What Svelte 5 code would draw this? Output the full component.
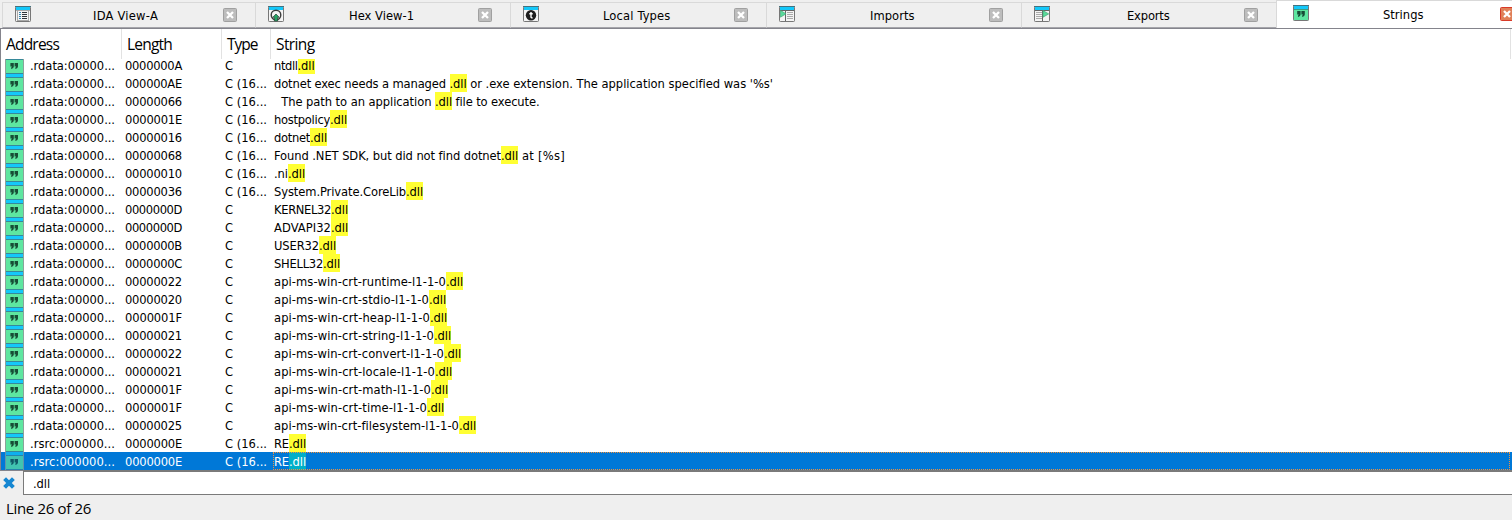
<script>
  const tabs = [
    { name: 'IDA View-A', w: 253, tx: 91, tw: 65, icon: 'ida' },
    { name: 'Hex View-1', w: 255, tx: 94, tw: 65, icon: 'hex' },
    { name: 'Local Types', w: 256, tx: 93, tw: 67.5, icon: 'types' },
    { name: 'Imports', w: 255, tx: 104, tw: 44.5, icon: 'imports' },
    { name: 'Exports', w: 255, tx: 106, tw: 42.5, icon: 'exports' },
    { name: 'Strings', w: 236, tx: 103, tw: 40.5, icon: 'strings', active: true }
  ];
  const W = 'C (16...';
  // length, type, text before the match, its width, text after the match, its width
  const rows = [
    ['0000000A', 'C', 'ntdll', 23.5, '', 0],
    ['000000AE', W, 'dotnet exec needs a managed ', 175.5, ' or .exe extension. The application specified was \'%s\'', 306.5],
    ['00000066', W, '  The path to an application ', 161, ' file to execute.', 87.5],
    ['0000001E', W, 'hostpolicy', 56, '', 0],
    ['00000016', W, 'dotnet', 36, '', 0],
    ['00000068', W, 'Found .NET SDK, but did not find dotnet', 227, ' at [%s]', 47],
    ['00000010', W, '.ni', 14, '', 0],
    ['00000036', W, 'System.Private.CoreLib', 132, '', 0],
    ['0000000D', 'C', 'KERNEL32', 57, '', 0],
    ['0000000D', 'C', 'ADVAPI32', 57, '', 0],
    ['0000000B', 'C', 'USER32', 45, '', 0],
    ['0000000C', 'C', 'SHELL32', 49, '', 0],
    ['00000022', 'C', 'api-ms-win-crt-runtime-l1-1-0', 172, '', 0],
    ['00000020', 'C', 'api-ms-win-crt-stdio-l1-1-0', 155, '', 0],
    ['0000001F', 'C', 'api-ms-win-crt-heap-l1-1-0', 156, '', 0],
    ['00000021', 'C', 'api-ms-win-crt-string-l1-1-0', 160, '', 0],
    ['00000022', 'C', 'api-ms-win-crt-convert-l1-1-0', 170, '', 0],
    ['00000021', 'C', 'api-ms-win-crt-locale-l1-1-0', 161, '', 0],
    ['0000001F', 'C', 'api-ms-win-crt-math-l1-1-0', 157, '', 0],
    ['0000001F', 'C', 'api-ms-win-crt-time-l1-1-0', 153, '', 0],
    ['00000025', 'C', 'api-ms-win-crt-filesystem-l1-1-0', 185, '', 0],
    ['0000000E', W, 'RE', 15, '', 0],
    ['0000000E', W, 'RE', 15, '', 0]
  ];
  const addr = (i) => (i > 20 ? '.rsrc:000000...' : '.rdata:00000...');

  // spreads the letters so that a label takes exactly its column width
  function fit(node, width) {
    if (!width) return;
    const natural = node.getBoundingClientRect().width;
    node.style.letterSpacing = (width - natural) / node.textContent.length + 'px';
  }
</script>

{#snippet quotes(x, y)}
  <path transform="translate({x} {y})" d="M0 0h3.4v3.4q0 1.9-2.4 2.6l-.4-1 1-1.4H0zM4.2 0h3.4v3.4q0 1.9-2.4 2.6l-.4-1 1-1.4H4.2z" fill="#174d36" />
{/snippet}

{#snippet tabIcon(kind)}
  <svg class="icon" width="16" height="16" viewBox="0 0 16 16">
    <rect x=".5" y=".5" width="15" height="15" rx=".8" fill={kind === 'strings' ? '#5ee6a0' : '#f4f4f4'} stroke="#777" />
    <rect x="1" y="1" width="14" height="3" fill="#14c8fa" />
    <path d="M0 .5h16" stroke="#43727f" />
    {#if kind === 'ida'}
      <path d="M1 4.5h14M2.5 4v11M13.5 4v11M2 14.5h12" stroke="#a9a9a9" />
      <path d="M4 6.5h2M4 8.5h2M4 10.5h2M4 12.5h2" stroke="#2c83b3" />
      <path d="M7 6.5h5M7 8.5h5M7 10.5h5M7 12.5h5" stroke="#30343a" />
    {:else if kind === 'hex'}
      <circle cx="8" cy="9" r="4.8" fill="none" stroke="#3c3c3c" stroke-width="1.4" />
      <path d="M8 8l3.2 3.3H9.6V15H6.4v-3.7H4.8z" fill="#25a565" stroke="#263f34" stroke-width=".7" />
    {:else if kind === 'types'}
      <circle cx="8" cy="9.2" r="5.2" fill="#1d1d1d" />
      <path d="M8 6v5q0 1 1.6 .8M6.3 7.8h3.4" stroke="#fff" stroke-width="1.4" fill="none" />
    {:else if kind === 'imports'}
      <path d="M6.5 4v11M1 4.5h14" stroke="#666" />
      <path d="M8 6.5h6M8 8.5h6M8 10.5h6M8 12.5h6" stroke="#aaa" />
      <path d="M1.5 4.5l5.5 3.3-5.5 3.4z" fill="#5adb9b" stroke="#43a978" stroke-width=".7" />
    {:else if kind === 'exports'}
      <path d="M8.5 4v11M1 4.5h14" stroke="#666" />
      <path d="M2 6.5h6M2 8.5h6M2 10.5h6M2 12.5h6" stroke="#aaa" />
      <path d="M9 4.6l5.7 3.3L9 11.2z" fill="#5adb9b" stroke="#43a978" stroke-width=".7" />
    {:else}
      <path d="M1 4.5h14" stroke="#3f9c82" />
      {@render quotes(4.2, 6)}
    {/if}
  </svg>
{/snippet}

<main>
  <nav>
    {#each tabs as t}
      <div class="tab" class:active={t.active} style:width="{t.w}px">
        {@render tabIcon(t.icon)}
        <span class="label" style:margin-left="{t.tx - 29}px"><span use:fit={t.tw}>{t.name}</span></span>
        <svg class="close" width="14" height="14" viewBox="0 0 14 14">
          <rect x=".5" y=".5" width="13" height="13" rx="1" fill={t.active ? '#e08058' : '#bdbdbd'} stroke={t.active ? '#d83a28' : '#a0a0a0'} />
          <path d="M4 4l6 6M10 4l-6 6" stroke="#fff" stroke-width="2.3" />
        </svg>
      </div>
    {/each}
  </nav>

  <section>
    <header>
      <div class="h a"><span use:fit={53}>Address</span></div>
      <div class="h l"><span use:fit={45}>Length</span></div>
      <div class="h t"><span use:fit={30.5}>Type</span></div>
      <div class="h s"><span use:fit={38.5}>String</span></div>
    </header>
    <div class="list">
      {#each rows as [len, type, pre, pw, post, sw], i}
        <div class="row" class:selected={i === 22}>
          <svg class="glyph" width="19" height="18" viewBox="0 0 19 18">
            <rect width="19" height="18" fill="#5ee6a0" />
            <rect width="19" height="3" fill="#14c8fa" />
            <path d="M0 3.5h19M0 17.5h19" stroke="#36899a" />
            <path d="M.5 0v18M18.5 0v18" stroke="#8aa39a" />
            {@render quotes(5.4, 7)}
            {#if i === 22}<rect width="19" height="18" fill="#0078d7" opacity=".3" />{/if}
          </svg>
          <span class="c a"><span use:fit={85}>{addr(i)}</span></span>
          <span class="c l"><span use:fit={57}>{len}</span></span>
          <span class="c t"><span use:fit={type === 'C' ? 8 : 42}>{type}</span></span>
          <span class="c s"><span use:fit={pw}>{pre}</span><mark use:fit={17}>.dll</mark>{#if post}<span use:fit={sw}>{post}</span>{/if}</span>
        </div>
      {/each}
    </div>
  </section>

  <div class="filter">
    <div class="clear">
      <svg width="12" height="12" viewBox="0 0 12 12"><path d="M1.6 1.6l8.8 8.8M10.4 1.6l-8.8 8.8" stroke="#1687d2" stroke-width="4" /></svg>
    </div>
    <div class="input"><span use:fit={17}>.dll</span></div>
  </div>
  <footer><span use:fit={85}>Line 26 of 26</span></footer>
</main>

<style>
  :global(body) { margin: 0; overflow: hidden; }
  * { box-sizing: border-box; }
  main {
    width: 1512px; height: 520px; overflow: hidden;
    display: flex; flex-direction: column;
    background: #efefef; color: #000;
    font: 12.8px/18px "DejaVu Sans Condensed", "DejaVu Sans", sans-serif;
    font-stretch: condensed;
    white-space: pre;
  }
  nav { height: 29px; flex: none; display: flex; padding-left: 2px; border-bottom: 1px solid #84848c; }
  .tab {
    flex: none; height: 26px; margin-top: 2px; display: flex; align-items: flex-start;
    border-top: 1px solid #d9d9d9; border-left: 1px solid #d9d9d9; border-bottom: 1px solid #a5a5aa;
    padding: 3px 18px 0 12px;
  }
  .tab.active { height: 28px; margin-top: 0; padding: 4px 0 0 12px; background: #fff; border-bottom: 0; overflow: hidden; }
  .icon { flex: none; }
  .active .icon { margin-left: 4px; }
  .label { flex: 1; height: 22px; line-height: 20px; }
  .close { flex: none; margin-top: 2px; }
  .active .close { margin: 2px -2px 0 0; }

  section { height: 441px; flex: none; background: #fff; border-left: 1px solid #84848c; display: flex; flex-direction: column; overflow: hidden; }
  header { height: 30px; flex: none; display: flex; position: relative; z-index: 1; background: #fff; font: 15.5px/31px "Open Sans", sans-serif; }
  .h { border-right: 1px solid #e2e2e2; padding-left: 5px; }
  .h.a { width: 121px; }
  .h.l { width: 100px; }
  .h.t { width: 49px; }
  .h.s { width: 1240px; }
  .list { margin-top: -3px; }
  .row { height: 18px; line-height: 20px; display: flex; padding-left: 4px; }
  .glyph { flex: none; }
  .c { flex: none; height: 18px; }
  .c.a { width: 101px; padding-left: 6px; }
  .c.l { width: 100px; }
  .c.t { width: 48px; }
  .c.s { width: 1237px; padding-left: 1px; display: flex; }
  mark { height: 18px; background: #ffff33; color: inherit; }
  .selected { background: #0078d7; color: #fff; }
  .selected .s { outline: 1px dotted #f0913c; outline-offset: -1px; }
  .selected mark { background: #00afc8; }

  .filter { height: 25px; flex: none; display: flex; }
  .clear { width: 23px; border-top: 1px solid #84848c; padding: 6px 0 0 3px; line-height: 0; }
  .input { flex: 1; background: #fff; border: 1px solid #7a7a7a; border-top-width: 2px; border-right: 0; padding: 2px 0 0 9px; line-height: 19px; }
  footer { padding-left: 6px; font: 15px/27px "Open Sans", sans-serif; }
</style>
